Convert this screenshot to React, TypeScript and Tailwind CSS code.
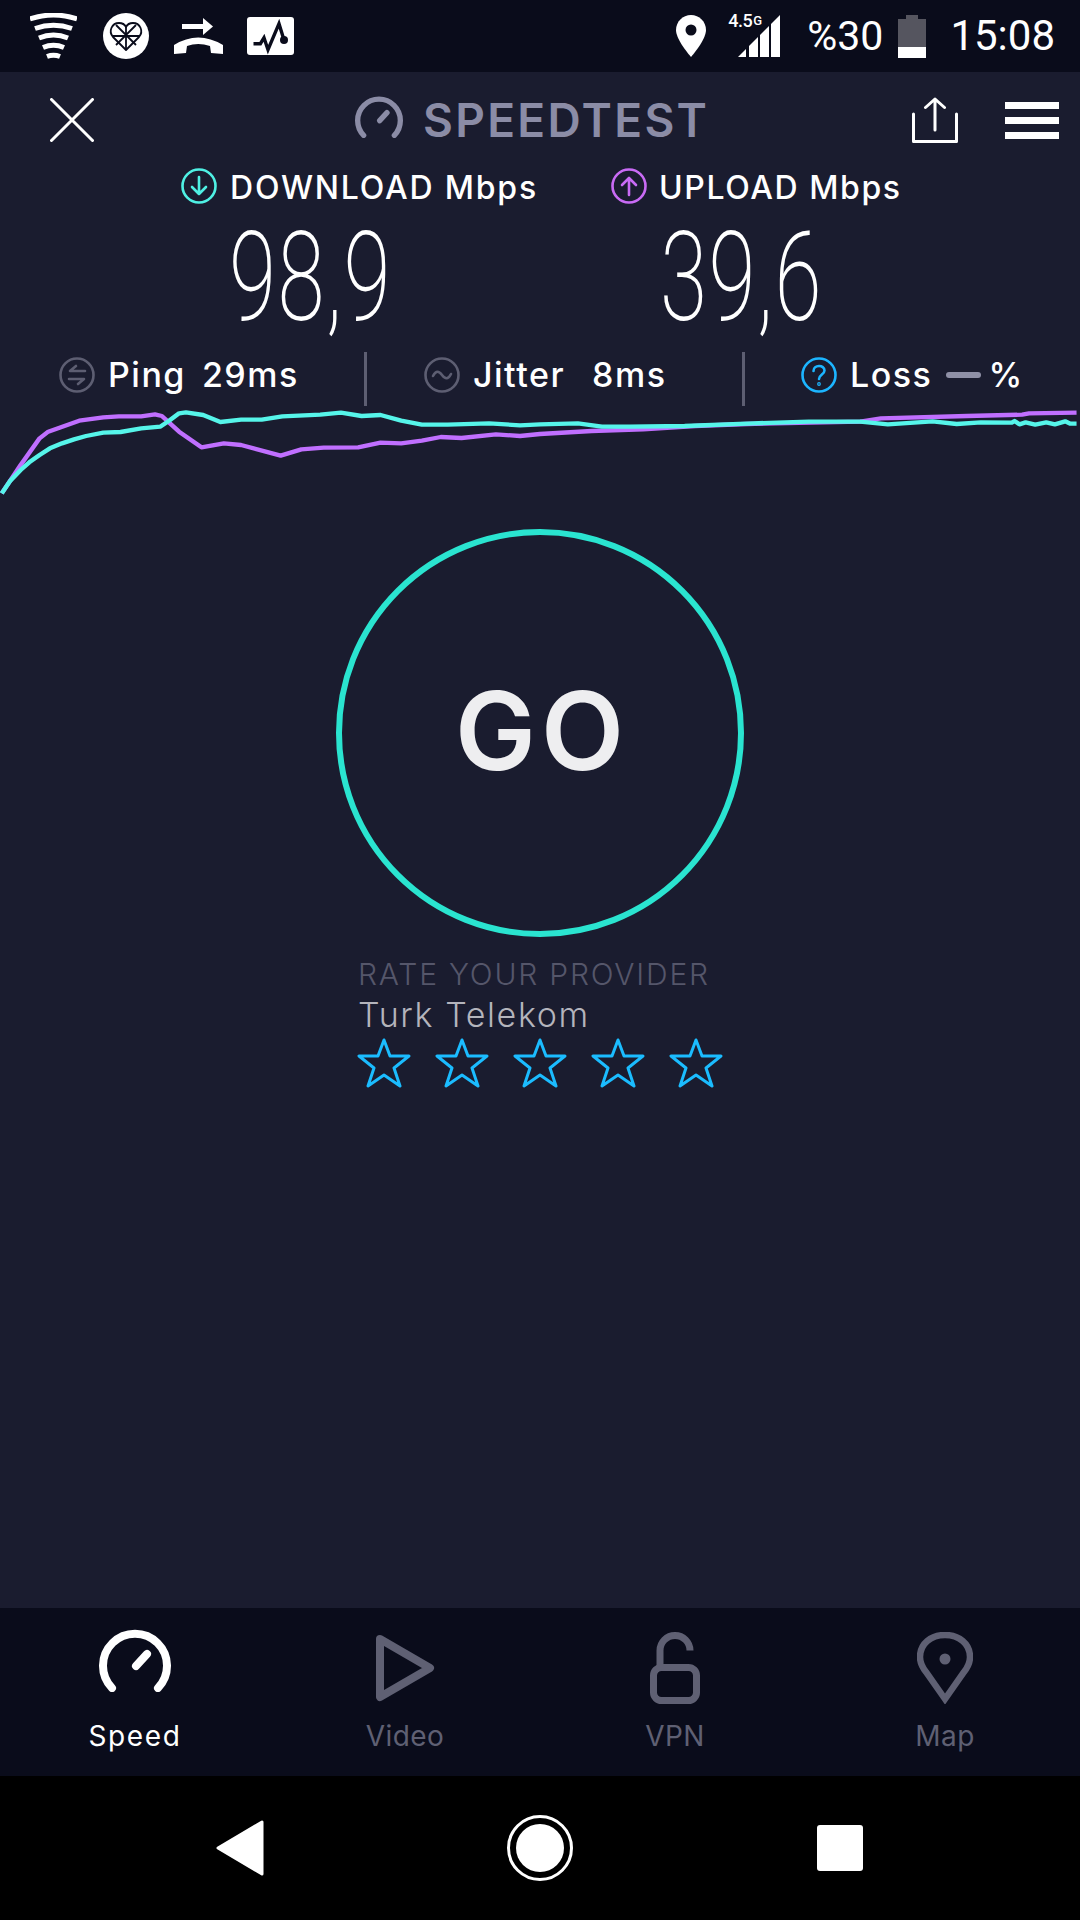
const purple = "5,310 60,225 115,145 140,125 230,92 300,82 345,79 410,79 450,73 470,78 520,125 585,172 650,160 700,165 815,197 875,178 940,173 1040,172 1105,158 1165,160 1225,152 1280,141 1340,144 1440,133 1510,138 1568,132 1718,123 1868,118 2018,108 2168,102 2498,95 2558,85 2808,78 2968,74 2988,70 3126,68";
const teal = "5,310 30,272 60,240 85,217 115,195 145,175 180,160 215,148 250,138 300,128 350,126 410,115 465,110 490,93 520,70 540,67 590,75 640,96 700,89 760,89 820,79 930,74 990,68 1050,78 1105,75 1165,92 1225,104 1300,104 1420,100 1510,106 1568,103 1678,100 1748,110 1828,110 1988,108 2188,100 2348,95 2498,95 2578,103 2708,94 2778,102 2848,97 2938,98 2946,93 2960,103 2978,97 3006,104 3038,97 3063,103 3093,94 3108,101 3126,101";

function Gauge({ className, color }: { className: string; color: string }) {
  return (
    <svg viewBox="0 0 72 63" className={className} fill="none" stroke={color} strokeWidth="8" strokeLinecap="round">
      <path d="M13 59A32 32 0 1 1 59 59" />
      <path d="M37 37L48 25" />
    </svg>
  );
}

function Star() {
  return (
    <svg viewBox="0 0 54 50" className="w-[54px] h-[50px]" fill="none" stroke="#1bbcff" strokeWidth="3" strokeLinejoin="round">
      <polygon points="27,2 33,18 52,18 37,30 43,48 27,37 11,48 17,30 2,18 21,18" />
    </svg>
  );
}

function RoundIcon({ color, children }: { color: string; children: React.ReactNode }) {
  return (
    <svg viewBox="0 0 36 36" className="w-[36px] h-[36px] shrink-0" fill="none" stroke={color} strokeWidth="2.6" strokeLinecap="round" strokeLinejoin="round">
      <circle cx="18" cy="18" r="16.5" />
      {children}
    </svg>
  );
}

function StatusBar() {
  return (
    <div className="h-[72px] bg-[#0a0c1b] flex items-center pl-[30px] pr-[25px] text-white font-['Roboto',sans-serif]">
      {/* wifi */}
      <svg viewBox="0 0 47 46" className="w-[47px] h-[46px]" fill="none" stroke="#fff" strokeWidth="5">
        <path d="M0 6Q23.5 -2 47 6" />
        <path d="M5 15.5Q23.5 9 42 15.5" />
        <path d="M9 25Q23.5 19 38 25" />
        <path d="M13 34.5Q23.5 30 34 34.5" />
        <path d="M17 43.5Q23.5 41 30 43.5" />
      </svg>
      {/* heart badge */}
      <svg viewBox="0 0 46 46" className="w-[46px] h-[46px] ml-[26px]">
        <circle cx="23" cy="23" r="23" fill="#fff" />
        <g fill="none" stroke="#0a0c1b" strokeWidth="1.8" strokeLinejoin="round">
          <path d="M23 37L10 24C5 18 9 10 16 10C20 10 22 12 23 14C24 12 26 10 30 10C37 10 41 18 36 24Z" />
          <path d="M23 14V37M10 23H37M13 12L33 32M33 12L13 32" />
        </g>
      </svg>
      {/* call forwarding */}
      <svg viewBox="0 0 49 36" className="w-[49px] h-[36px] ml-[25px]" fill="#fff">
        <rect x="8" y="6" width="24" height="5" />
        <polygon points="29,0 39,8.5 29,17" />
        <path d="M0 36V27Q24 12 49 27V36L37 35L36 28Q24 24 13 28L12 35Z" />
      </svg>
      {/* activity monitor */}
      <svg viewBox="0 0 47 38" className="w-[47px] h-[38px] ml-[24px]">
        <rect width="47" height="38" rx="3" fill="#fff" />
        <polyline points="6.5,26.7 13.4,26.7 17,20.7 21,32.7 32,6.7 37,23" fill="none" stroke="#0a0c1b" strokeWidth="3.4" />
        <circle cx="37" cy="23" r="4" fill="#0a0c1b" />
      </svg>

      <svg viewBox="0 0 30 42" className="w-[30px] h-[42px] ml-auto">
        <path d="M15 0C6.7 0 0 6.7 0 15C0 25 15 42 15 42C15 42 30 25 30 15C30 6.7 23.3 0 15 0Z" fill="#fff" />
        <circle cx="15" cy="15" r="5.5" fill="#0a0c1b" />
      </svg>
      <div className="relative w-[42px] h-[42px] ml-[32px]">
        <svg viewBox="0 0 42 42" className="w-[42px] h-[42px]" fill="#fff">
          <polygon points="0,42 8,34 8,42" />
          <polygon points="11,31 20,22 20,42 11,42" />
          <polygon points="22,20 31,11 31,42 22,42" />
          <polygon points="33,9 42,0 42,42 33,42" />
        </svg>
        <span className="absolute left-[-10px] top-[-3px] text-[18px] leading-[18px] font-medium whitespace-nowrap tracking-[-0.5px]">
          4.5<span className="text-[13px] align-top ml-[1px]">G</span>
        </span>
      </div>
      <span className="text-[41px] leading-none ml-[27px]">%30</span>
      <svg viewBox="0 0 28 43" className="w-[28px] h-[43px] ml-[15px]">
        <path d="M8 0H20V4H28V32H0V4H8Z" fill="#55555f" />
        <rect y="32" width="28" height="11" fill="#fff" />
      </svg>
      <span className="text-[42px] leading-none ml-[24px]">15:08</span>
    </div>
  );
}

function Header() {
  return (
    <div className="h-[96px] flex items-center pl-[50px] pr-[21px]">
      <svg viewBox="0 0 44 44" className="w-[44px] h-[44px]" fill="none" stroke="#fff" strokeWidth="3" strokeLinecap="round">
        <path d="M1.5 1.5L42.5 42.5M42.5 1.5L1.5 42.5" />
      </svg>
      <div className="flex items-center ml-[261px]">
        <Gauge className="w-[48px] h-[42px] mb-[6px]" color="#8b8ca6" />
        <span className="ml-[20px] text-[46px] leading-none font-semibold tracking-[2.3px] text-[#8b8ca6] font-['Inter',sans-serif] whitespace-nowrap">SPEEDTEST</span>
      </div>
      <svg viewBox="0 0 46 46" className="w-[46px] h-[46px] ml-auto" fill="none" stroke="#fff" strokeWidth="3" strokeLinecap="round" strokeLinejoin="round">
        <path d="M1.5 17V44.5H44.5V17" />
        <path d="M23 2V33M13.5 10.5L23 2L32.5 10.5" />
      </svg>
      <div className="w-[54px] ml-[47px] flex flex-col gap-[8px]">
        <div className="h-[7px] bg-white" />
        <div className="h-[7px] bg-white" />
        <div className="h-[7px] bg-white" />
      </div>
    </div>
  );
}

function Speeds() {
  return (
    <div className="h-[184px] flex pl-[181px] font-['Inter',sans-serif] text-white">
      <div className="w-[430px]">
        <div className="flex items-center h-[36px]">
          <RoundIcon color="#4ff0e4">
            <path d="M18 9V26M11 19L18 26L25 19" />
          </RoundIcon>
          <span className="ml-[13px] pt-[4px] text-[32px] leading-none font-medium tracking-[1.8px] whitespace-nowrap">DOWNLOAD Mbps</span>
        </div>
        <div className="ml-[48px] mt-[12px] text-[124px] leading-[124px] font-extralight tracking-[2px] font-['Roboto',sans-serif] origin-left scale-x-[0.69]">98,9</div>
      </div>
      <div>
        <div className="flex items-center h-[36px]">
          <RoundIcon color="#c96bf5">
            <path d="M18 27V10M11 17L18 10L25 17" />
          </RoundIcon>
          <span className="ml-[12px] pt-[4px] text-[32px] leading-none font-medium tracking-[1.6px] whitespace-nowrap">UPLOAD Mbps</span>
        </div>
        <div className="ml-[49px] mt-[12px] text-[124px] leading-[124px] font-extralight tracking-[2px] font-['Roboto',sans-serif] origin-left scale-x-[0.69]">39,6</div>
      </div>
    </div>
  );
}

function Stats() {
  return (
    <div className="h-[54px] flex items-stretch font-['Inter',sans-serif] font-medium text-white text-[34px] tracking-[1.5px] leading-none">
      <div className="w-[364px] pl-[59px] pb-[9px] flex items-center">
        <RoundIcon color="#5d5e72">
          <path d="M26 14H11L17 9M10 22H25L19 27" />
        </RoundIcon>
        <span className="ml-[13px]">Ping</span>
        <span className="ml-[16px]">29ms</span>
      </div>
      <div className="w-[3px] bg-[#5d5e72]" />
      <div className="w-[375px] pl-[57px] pb-[9px] flex items-center">
        <RoundIcon color="#5d5e72">
          <path d="M9 19C12 13 15 14 18 18C21 22 24 23 27 17" />
        </RoundIcon>
        <span className="ml-[13px]">Jitter</span>
        <span className="ml-[27px]">8ms</span>
      </div>
      <div className="w-[3px] bg-[#5d5e72]" />
      <div className="pl-[56px] pb-[9px] flex items-center">
        <RoundIcon color="#1cb5ff">
          <path d="M12.5 14C12.5 7.5 23.5 7.5 23.5 13.5C23.5 17.5 18 17.5 18 22" />
          <circle cx="18" cy="27" r="0.6" />
        </RoundIcon>
        <span className="ml-[13px]">Loss</span>
        <div className="ml-[14px] w-[35px] h-[6px] rounded-full bg-[#8f90a6]" />
        <span className="ml-[7px] tracking-normal">%</span>
      </div>
    </div>
  );
}

function NavItem({ label, active, children }: { label: string; active?: boolean; children: React.ReactNode }) {
  return (
    <div className={`flex flex-col items-center ${active ? "text-white tracking-[1.6px]" : "text-[#5f6073] tracking-[0.4px]"}`}>
      <div className="h-[96px] flex items-start">{children}</div>
      <span className="mt-[15px] text-[28px] leading-[34px] font-['Inter',sans-serif]">{label}</span>
    </div>
  );
}

export default function App() {
  return (
    <div className="w-[1080px] h-[1920px] bg-[#1a1c2f] flex flex-col overflow-hidden">
      <StatusBar />
      <Header />
      <Speeds />
      <Stats />

      {/* speed graph */}
      <svg viewBox="0 48 3136 312" preserveAspectRatio="none" className="w-[1080px] h-[104px]" fill="none" strokeWidth="13" strokeLinejoin="round">
        <polyline points={purple} stroke="#c06fff" />
        <polyline points={teal} stroke="#56f5ea" />
      </svg>

      <div className="mt-[19px] mx-auto w-[408px] h-[408px] rounded-full border-[6px] border-[#2ae4d0] flex items-center justify-center">
        <span className="pb-[4px] pl-[4px] text-[108px] leading-none font-semibold tracking-[5px] text-[#eeeef0] font-['Inter',sans-serif]">GO</span>
      </div>

      <div className="ml-[358px] mt-[22px] font-['Inter',sans-serif] font-light">
        <div className="text-[30px] leading-[30px] tracking-[1.8px] text-[#55566a] whitespace-nowrap">RATE YOUR PROVIDER</div>
        <div className="mt-[8px] text-[34px] leading-[36px] tracking-[1.6px] text-[#b4b4bc]">Turk Telekom</div>
      </div>
      <div className="ml-[357px] mt-[5px] flex gap-[24px]">
        <Star />
        <Star />
        <Star />
        <Star />
        <Star />
      </div>

      <div className="flex-1" />

      <div className="h-[168px] bg-[#0a0c1b] grid grid-cols-4">
        <NavItem label="Speed" active>
          <Gauge className="w-[72px] h-[63px] mt-[21px]" color="currentColor" />
        </NavItem>
        <NavItem label="Video">
          <svg viewBox="0 0 60 68" className="w-[60px] h-[68px] mt-[26px]" fill="none" stroke="currentColor" strokeWidth="8" strokeLinejoin="round">
            <path d="M5 5L55 34L5 63Z" />
          </svg>
        </NavItem>
        <NavItem label="VPN">
          <svg viewBox="0 0 50 72" className="w-[50px] h-[72px] mt-[24px]" fill="none" stroke="currentColor" strokeWidth="7">
            <rect x="3.5" y="35.5" width="43" height="33" rx="8" />
            <path d="M10 34V18.5A15 15 0 0 1 40 18.5" />
          </svg>
        </NavItem>
        <NavItem label="Map">
          <svg viewBox="0 0 56 72" className="w-[56px] h-[72px] mt-[24px]" fill="none" stroke="currentColor" strokeWidth="6.5">
            <path d="M28 67L9 40C5 35 3 30 3 25C3 11.5 14 3 28 3C42 3 53 11.5 53 25C53 30 51 35 47 40Z" />
            <circle cx="28" cy="27" r="5.5" fill="currentColor" stroke="none" />
          </svg>
        </NavItem>
      </div>

      {/* system navigation */}
      <div className="h-[144px] bg-black grid grid-cols-3 px-[90px] items-center justify-items-center">
        <svg viewBox="0 0 48 56" className="w-[48px] h-[56px]" fill="#fff" stroke="#fff" strokeWidth="3" strokeLinejoin="round">
          <polygon points="2,28 46,2 46,54" />
        </svg>
        <div className="w-[66px] h-[66px] rounded-full border-[3px] border-white flex items-center justify-center">
          <div className="w-[48px] h-[48px] rounded-full bg-white" />
        </div>
        <div className="w-[46px] h-[46px] rounded-[3px] bg-white" />
      </div>
    </div>
  );
}
